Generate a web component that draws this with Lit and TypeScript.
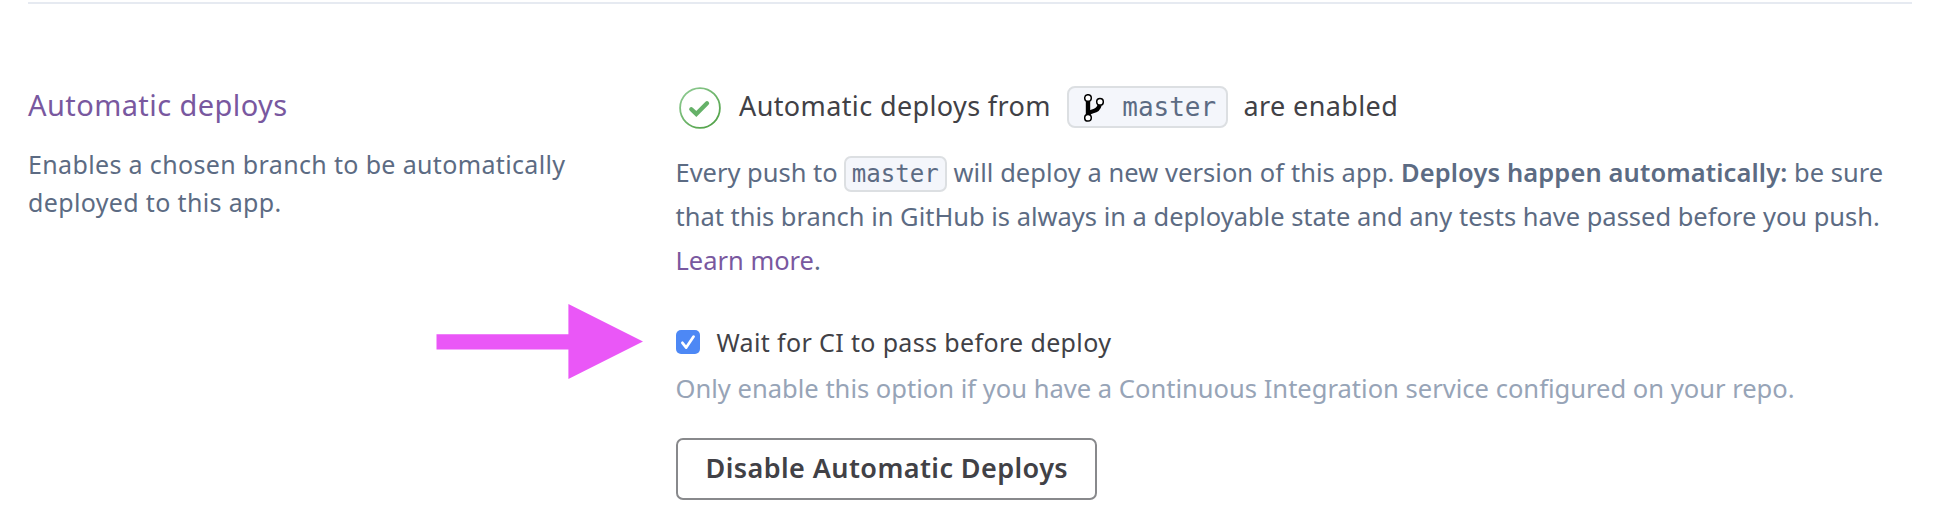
import { LitElement, html, css, svg } from "lit";
import { customElement, state } from "lit/decorators.js";

const statusIcon = svg`
  <svg class="status-icon" width="42" height="42" viewBox="0 0 42 42" fill="none" aria-hidden="true">
    <defs>
      <linearGradient id="ring" x1="4" y1="2" x2="36" y2="40" gradientUnits="userSpaceOnUse">
        <stop offset="0" stop-color="#8fcb93" />
        <stop offset="1" stop-color="#4fa045" />
      </linearGradient>
    </defs>
    <circle cx="21" cy="21" r="19.9" stroke="url(#ring)" stroke-width="1.8" />
    <path d="M12.3 22.2 L17.3 26.9 L28 16.2" stroke="#65b168" stroke-width="4.3" stroke-linecap="round" />
  </svg>`;

const branchIcon = svg`
  <svg class="branch-icon" width="20" height="28" viewBox="0 0 20 28" fill="none" stroke="#000" aria-hidden="true">
    <path d="M4 7 V21" stroke-width="4.4" />
    <path d="M15.6 11 C14.6 15.6 12 16.6 9 17.2 C6.3 17.8 5 18.6 4.4 20.4" stroke-width="4.2" />
    <circle cx="4" cy="4" r="3.3" fill="#fff" stroke-width="1.5" />
    <circle cx="16" cy="7.8" r="3.3" fill="#fff" stroke-width="1.5" />
    <circle cx="4" cy="23.8" r="3.3" fill="#fff" stroke-width="1.5" />
  </svg>`;

@customElement("app-root")
export class AppRoot extends LitElement {
  @state() private waitForCi = true;

  static styles = css`
    :host {
      display: block;
      position: relative;
      height: 522px;
      overflow: hidden;
      background: #fff;
      color: #5c6b83;
      font-family: "Noto Sans", sans-serif;
      white-space: nowrap;
    }
    .section {
      display: grid;
      grid-template-columns: 648px 1fr;
      margin: 0 40px 0 28px;
      padding-top: 82px;
      border-top: 2px solid #e6eaf1;
    }
    .page { padding-top: 2px; }
    h2 {
      margin: -1px 0 20px;
      font-size: 29px;
      font-weight: 400;
      line-height: 40px;
      letter-spacing: 0.42px;
      color: #79589f;
    }
    p { margin: 0; }
    .summary { font-size: 25px; line-height: 38px; letter-spacing: 0.35px; }
    .status {
      display: flex;
      align-items: flex-start;
      height: 42px;
      font-size: 27px;
      line-height: 39px;
      letter-spacing: 0.38px;
      color: #414146;
    }
    .status-icon { margin: 1px 18px 0 3px; flex: none; }
    .branch {
      display: flex;
      box-sizing: border-box;
      width: 161px;
      height: 42px;
      margin: 0 15.5px 0 16.2px;
      padding: 0 0 0 15px;
      border: 2px solid #dcdfe2;
      border-radius: 8px;
      background: #f4f6fb;
      color: #5c6b83;
      font: 26px/38px "DejaVu Sans Mono", monospace;
      letter-spacing: 0;
    }
    .branch-icon { margin: 6px 18.2px 0 0; flex: none; }
    .details { margin: 22px 0 0 -0.5px; font-size: 25.48px; line-height: 44px; }
    .details code {
      display: inline-block;
      box-sizing: border-box;
      width: 103px;
      height: 36px;
      margin-left: -0.5px;
      padding-left: 6px;
      border: 2px solid #dcdfe2;
      border-radius: 7px;
      background: #f4f6fb;
      font: 24.1px/33px "DejaVu Sans Mono", monospace;
    }
    .run { letter-spacing: 0.07px; }
    strong { font-weight: 600; letter-spacing: 0.12px; }
    a { color: #79589f; text-decoration: none; }
    .option {
      display: flex;
      margin-top: 42px;
      font-size: 25px;
      line-height: 36px;
      letter-spacing: 0.36px;
      color: #414146;
    }
    .box {
      width: 24px;
      height: 24px;
      margin: 6px 16.5px 0 0;
      padding: 0;
      border: 0;
      border-radius: 5px;
      background: #4d88f5;
    }
    .box svg { display: block; }
    .hint { margin: 10px 0 0 -0.5px; font-size: 25.56px; line-height: 36px; color: #97a4b7; }
    .disable {
      display: block;
      box-sizing: border-box;
      width: 421px;
      height: 62px;
      margin: 32px 0 0;
      padding: 0 0 3px 27.5px;
      border: 2px solid #88898c;
      border-radius: 7px;
      background: #fff;
      color: #414146;
      font: 600 27px/55px "Noto Sans", sans-serif;
      letter-spacing: 0.42px;
      text-align: left;
    }
    .pointer { position: absolute; left: 436px; top: 304px; }
  `;

  render() {
    return html`
      <div class="page">
        <section class="section">
          <div>
            <h2>Automatic deploys</h2>
            <p class="summary">Enables a chosen branch to be automatically<br />deployed to this app.</p>
          </div>
          <div>
            <div class="status">
              ${statusIcon}<span>Automatic deploys from</span>
              <span class="branch">${branchIcon}<span>master</span></span>
              <span>are enabled</span>
            </div>
            <p class="details">Every push to <code>master</code> <span class="run">will deploy a new version of this app.</span> <strong>Deploys happen automatically:</strong> be sure<br />that this branch in GitHub is always in a deployable state and any tests have passed before you push.<br /><a href="#">Learn more</a>.</p>
            <div class="option">
              <button class="box" role="checkbox" aria-checked=${this.waitForCi} aria-label="Wait for CI"
                @click=${() => (this.waitForCi = !this.waitForCi)}>
                ${this.waitForCi
                  ? html`<svg width="24" height="24" viewBox="0 0 24 24" fill="none"><path d="M6.4 12.8 L10.2 17.6 L17.6 6.6" stroke="#fff" stroke-width="2.7" stroke-linecap="round" stroke-linejoin="round" /></svg>`
                  : null}
              </button>
              <span>Wait for CI to pass before deploy</span>
            </div>
            <p class="hint">Only enable this option if you have a Continuous Integration service configured on your repo.</p>
            <button class="disable">Disable Automatic Deploys</button>
          </div>
        </section>
        <svg class="pointer" width="208" height="76" viewBox="0 0 208 76" aria-hidden="true">
          <path d="M0.5 30.3 H132.4 V0 L207 37.5 L132.4 75 V45.6 H0.5 Z" fill="#ea57f7" />
        </svg>
      </div>
    `;
  }
}
